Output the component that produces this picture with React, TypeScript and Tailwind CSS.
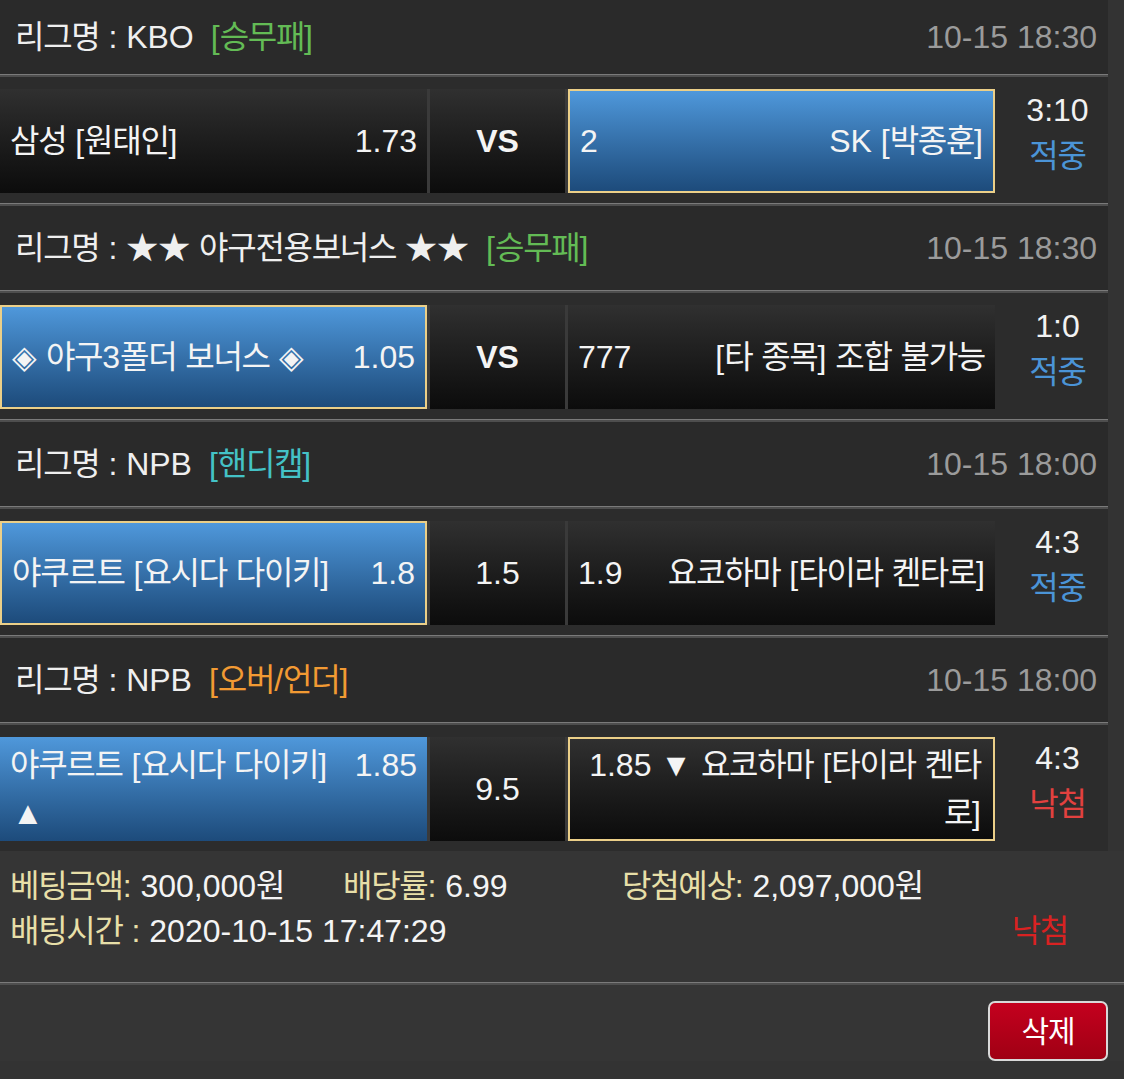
import React from "react"
import clsx from "clsx"

// hangul runs get a slightly tighter advance so widths line up with the original
function K({ t }: { t: string }) {
  const parts = t.split(/([\u1100-\u11ff\u3131-\u318e\uac00-\ud7a3]+)/)
  return (
    <>
      {parts.map((p, i) =>
        i % 2 === 1 ? (
          <span key={i} className="tracking-[-0.04em]">
            {p}
          </span>
        ) : (
          p
        ),
      )}
    </>
  )
}

type Tone = "blue" | "dark"

function Cell({
  tone,
  framed,
  className,
  children,
}: {
  tone: Tone
  framed?: boolean
  className?: string
  children: React.ReactNode
}) {
  return (
    <div
      className={clsx(
        "h-full",
        tone === "blue"
          ? "bg-linear-to-b from-[#4f98db] to-[#1d4b7b]"
          : "bg-linear-to-b from-[#303030] to-[#0c0c0c]",
        framed && "border-2 border-[#ebcf88]",
        className,
      )}
    >
      {children}
    </div>
  )
}

function Divider() {
  return <div className="h-[3px] border-t border-[#7a7a7a] bg-[#4e4e4e]" />
}

function Header({
  league,
  tag,
  tagColor,
  time,
  first,
}: {
  league: string
  tag: string
  tagColor: string
  time: string
  first?: boolean
}) {
  return (
    <div
      className={clsx(
        "flex items-center justify-between bg-[#2a2a2a] pl-[15px] pr-[11px] leading-[40px]",
        first ? "h-[74px]" : "h-[84px]",
      )}
    >
      <div className="flex items-center text-[#efefef]">
        <span>
          <K t={`리그명 : ${league}`} />
        </span>
        <span className={clsx("ml-[17px]", tagColor)}>
          <K t={tag} />
        </span>
      </div>
      <span className="text-[#9b9b9b]">{time}</span>
    </div>
  )
}

function Score({ score, result, win }: { score: string; result: string; win: boolean }) {
  return (
    <div className="flex h-full w-[113px] flex-col items-center justify-center pb-[16px] pl-[12px] leading-[46px]">
      <span className="text-[#f2f2f2]">{score}</span>
      <span className={win ? "text-[#4b94d7]" : "text-[#e2413f]"}>
        <K t={result} />
      </span>
    </div>
  )
}

type Game = {
  league: string
  tag: string
  tagColor: string
  time: string
  home: string
  homeOdds: string
  homeBlue: boolean
  mid: string
  midBold?: boolean
  awayOdds: string
  away: string
  awayBlue: boolean
  score: string
  result: string
}

const games: Game[] = [
  {
    league: "KBO",
    tag: "[승무패]",
    tagColor: "text-[#63bb55]",
    time: "10-15 18:30",
    home: "삼성 [원태인]",
    homeOdds: "1.73",
    homeBlue: false,
    mid: "VS",
    midBold: true,
    awayOdds: "2",
    away: "SK [박종훈]",
    awayBlue: true,
    score: "3:10",
    result: "적중",
  },
  {
    league: "★★ 야구전용보너스 ★★",
    tag: "[승무패]",
    tagColor: "text-[#63bb55]",
    time: "10-15 18:30",
    home: "◈ 야구3폴더 보너스 ◈",
    homeOdds: "1.05",
    homeBlue: true,
    mid: "VS",
    midBold: true,
    awayOdds: "777",
    away: "[타 종목] 조합 불가능",
    awayBlue: false,
    score: "1:0",
    result: "적중",
  },
  {
    league: "NPB",
    tag: "[핸디캡]",
    tagColor: "text-[#44c2c6]",
    time: "10-15 18:00",
    home: "야쿠르트 [요시다 다이키]",
    homeOdds: "1.8",
    homeBlue: true,
    mid: "1.5",
    awayOdds: "1.9",
    away: "요코하마 [타이라 켄타로]",
    awayBlue: false,
    score: "4:3",
    result: "적중",
  },
]

function MatchRow({ g }: { g: Game }) {
  return (
    <div className="flex h-[126px] items-start bg-[#2c2c2c] pt-[12px]">
      <div className="flex h-[104px] gap-[3px] bg-[#3a3a3a]">
        <Cell
          tone={g.homeBlue ? "blue" : "dark"}
          framed={g.homeBlue}
          className="flex w-[427px] items-center justify-between px-[10px]"
        >
          <span className="text-[#f4f4f4]">
            <K t={g.home} />
          </span>
          <span className="text-[#f4f4f4]">{g.homeOdds}</span>
        </Cell>
        <Cell tone="dark" className="flex w-[135px] items-center justify-center">
          <span className={clsx("text-[#f4f4f4]", g.midBold && "font-bold")}>{g.mid}</span>
        </Cell>
        <Cell
          tone={g.awayBlue ? "blue" : "dark"}
          framed={g.awayBlue}
          className="flex w-[427px] items-center justify-between px-[10px]"
        >
          <span className="text-[#f4f4f4]">{g.awayOdds}</span>
          <span className="text-[#f4f4f4]">
            <K t={g.away} />
          </span>
        </Cell>
      </div>
      <div className="h-[104px]">
        <Score score={g.score} result={g.result} win={g.result === "적중"} />
      </div>
    </div>
  )
}

function OverUnderRow() {
  return (
    <div className="flex h-[126px] items-start bg-[#2c2c2c] pt-[12px]">
      <div className="flex h-[104px] gap-[3px] bg-[#3a3a3a]">
        <Cell tone="blue" className="flex w-[427px] flex-col justify-center px-[10px] leading-[48px] text-[#f4f4f4]">
          <div className="flex justify-between">
            <span>
              <K t="야쿠르트 [요시다 다이키]" />
            </span>
            <span>1.85</span>
          </div>
          <div className="pl-[2px]">▲</div>
        </Cell>
        <Cell tone="dark" className="flex w-[135px] items-center justify-center">
          <span className="text-[#f4f4f4]">9.5</span>
        </Cell>
        <Cell
          tone="dark"
          framed
          className="flex w-[427px] items-center px-[12px] text-right leading-[48px] text-[#f4f4f4]"
        >
          <span className="w-full">
            <K t="1.85 ▼ 요코하마 [타이라 켄타로]" />
          </span>
        </Cell>
      </div>
      <div className="h-[104px]">
        <Score score="4:3" result="낙첨" win={false} />
      </div>
    </div>
  )
}

export default function App() {
  return (
    <div className="h-[1079px] w-[1124px] overflow-hidden bg-[#333333] font-['Liberation_Sans','Noto_Sans_CJK_KR',sans-serif] text-[32px]">
      <div className="w-[1108px]">
        {games.map((g, i) => (
          <div key={i}>
            {i > 0 && <Divider />}
            <Header league={g.league} tag={g.tag} tagColor={g.tagColor} time={g.time} first={i === 0} />
            <Divider />
            <MatchRow g={g} />
          </div>
        ))}
        <Divider />
        <Header league="NPB" tag="[오버/언더]" tagColor="text-[#f29a33]" time="10-15 18:00" />
        <Divider />
        <OverUnderRow />
      </div>

      <div className="bg-[#353535] pb-[28px] pl-[10px] pt-[13px] leading-[45px]">
        <div className="flex">
          <div className="w-[333px]">
            <span className="text-[#e7dfa8]">
              <K t="베팅금액:" />
            </span>{" "}
            <span className="text-[#f4f4f4]">
              <K t="300,000원" />
            </span>
          </div>
          <div className="w-[279px]">
            <span className="text-[#e7dfa8]">
              <K t="배당률:" />
            </span>{" "}
            <span className="text-[#f4f4f4]">6.99</span>
          </div>
          <div>
            <span className="text-[#e7dfa8]">
              <K t="당첨예상:" />
            </span>{" "}
            <span className="text-[#f4f4f4]">
              <K t="2,097,000원" />
            </span>
          </div>
        </div>
        <div className="flex justify-between pr-[56px]">
          <div>
            <span className="text-[#e7dfa8]">
              <K t="배팅시간 :" />
            </span>{" "}
            <span className="text-[#f4f4f4]">2020-10-15 17:47:29</span>
          </div>
          <span className="text-[#d92222]">
            <K t="낙첨" />
          </span>
        </div>
      </div>

      <Divider />

      <div className="flex justify-end bg-[#353535] pr-[16px] pt-[16px]">
        <button
          type="button"
          className="flex h-[60px] w-[120px] items-center justify-center rounded-[7px] border-2 border-[#d9d9d9] bg-linear-to-b from-[#c4001e] to-[#a00014] text-[30px] text-white"
        >
          <K t="삭제" />
        </button>
      </div>
    </div>
  )
}
